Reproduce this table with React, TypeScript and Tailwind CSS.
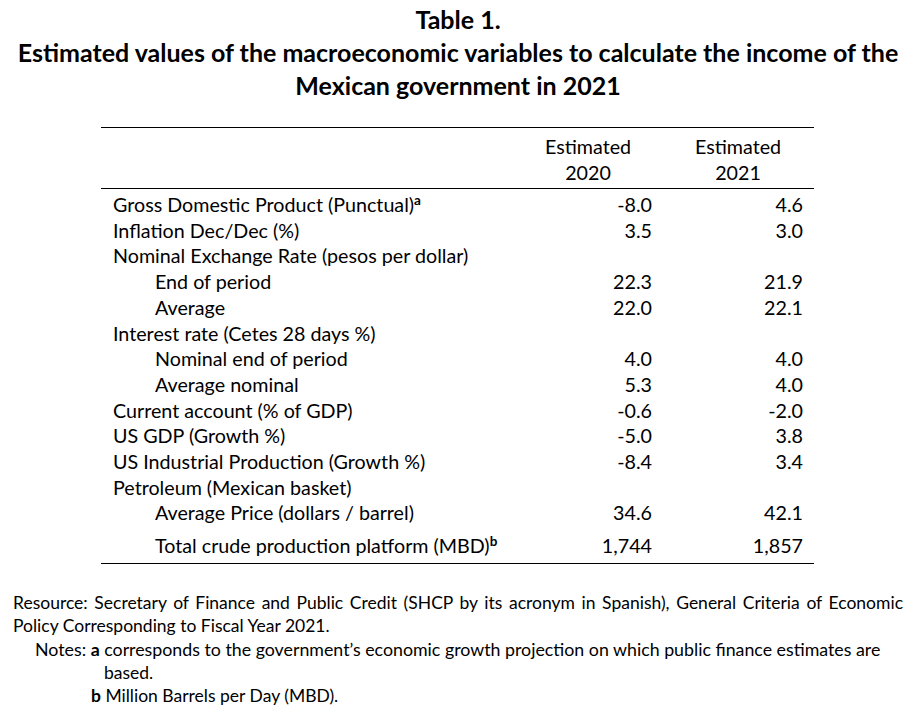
const rows: { label: string; sup?: string; indent?: boolean; a?: string; b?: string; tall?: boolean }[] = [
  { label: "Gross Domestic Product (Punctual)", sup: "a", a: "-8.0", b: "4.6" },
  { label: "Inflation Dec/Dec (%)", a: "3.5", b: "3.0" },
  { label: "Nominal Exchange Rate (pesos per dollar)" },
  { label: "End of period", indent: true, a: "22.3", b: "21.9" },
  { label: "Average", indent: true, a: "22.0", b: "22.1" },
  { label: "Interest rate (Cetes 28 days %)" },
  { label: "Nominal end of period", indent: true, a: "4.0", b: "4.0" },
  { label: "Average nominal", indent: true, a: "5.3", b: "4.0" },
  { label: "Current account (% of GDP)", a: "-0.6", b: "-2.0" },
  { label: "US GDP (Growth %)", a: "-5.0", b: "3.8" },
  { label: "US Industrial Production (Growth %)", a: "-8.4", b: "3.4" },
  { label: "Petroleum (Mexican basket)" },
  { label: "Average Price (dollars / barrel)", indent: true, a: "34.6", b: "42.1" },
  { label: "Total crude production platform (MBD)", sup: "b", indent: true, a: "1,744", b: "1,857", tall: true },
];

export default function App() {
  return (
    <div className="h-[726px] w-[916px] bg-white text-black font-['Lato','Liberation_Sans',sans-serif]">
      <div className="pt-[3px] text-center text-[25px] font-bold leading-[33px]">
        <div>Table 1.</div>
        <div className="whitespace-nowrap">Estimated values of the macroeconomic variables to calculate the income of the</div>
        <div>Mexican government in 2021</div>
      </div>

      <div className="ml-[101px] mt-[25px] w-[713px] text-[19.7px]">
        <div className="border-t border-black" />
        <div className="grid grid-cols-[413px_148px_152px] pt-[6px] pb-[2px] leading-[26px]">
          <div />
          <div className="text-center">Estimated<br />2020</div>
          <div className="text-center">Estimated<br />2021</div>
        </div>
        <div className="border-t border-black" />
        <div className="pt-[3px] pb-[4px]">
          {rows.map((r) => (
            <div
              key={r.label}
              className={`grid grid-cols-[413px_148px_152px] ${r.tall ? "pt-[6px] leading-[27px]" : "leading-[25.7px]"}`}
            >
              <div className={r.indent ? "pl-[54px]" : "pl-[12px]"}>
                {r.label}
                {r.sup && <sup className="text-[13.5px] font-bold">{r.sup}</sup>}
              </div>
              <div className="pr-[10px] text-right">{r.a}</div>
              <div className="pr-[11px] text-right">{r.b}</div>
            </div>
          ))}
        </div>
        <div className="border-t border-black" />
      </div>

      <div className="mt-[27px] text-[17.5px] leading-[23.3px]">
        <div className="ml-[13px] w-[890px] text-justify [text-align-last:justify]">
          Resource: Secretary of Finance and Public Credit (SHCP by its acronym in Spanish), General Criteria of Economic
        </div>
        <div className="ml-[13px]">Policy Corresponding to Fiscal Year 2021.</div>
        <div className="ml-[35px] text-[17.8px]">
          Notes: <span className="font-bold">a</span> corresponds to the government’s economic growth projection on which public finance estimates are
        </div>
        <div className="ml-[104px]">based.</div>
        <div className="ml-[91px]">
          <span className="font-bold">b</span> Million Barrels per Day (MBD).
        </div>
      </div>
    </div>
  );
}
